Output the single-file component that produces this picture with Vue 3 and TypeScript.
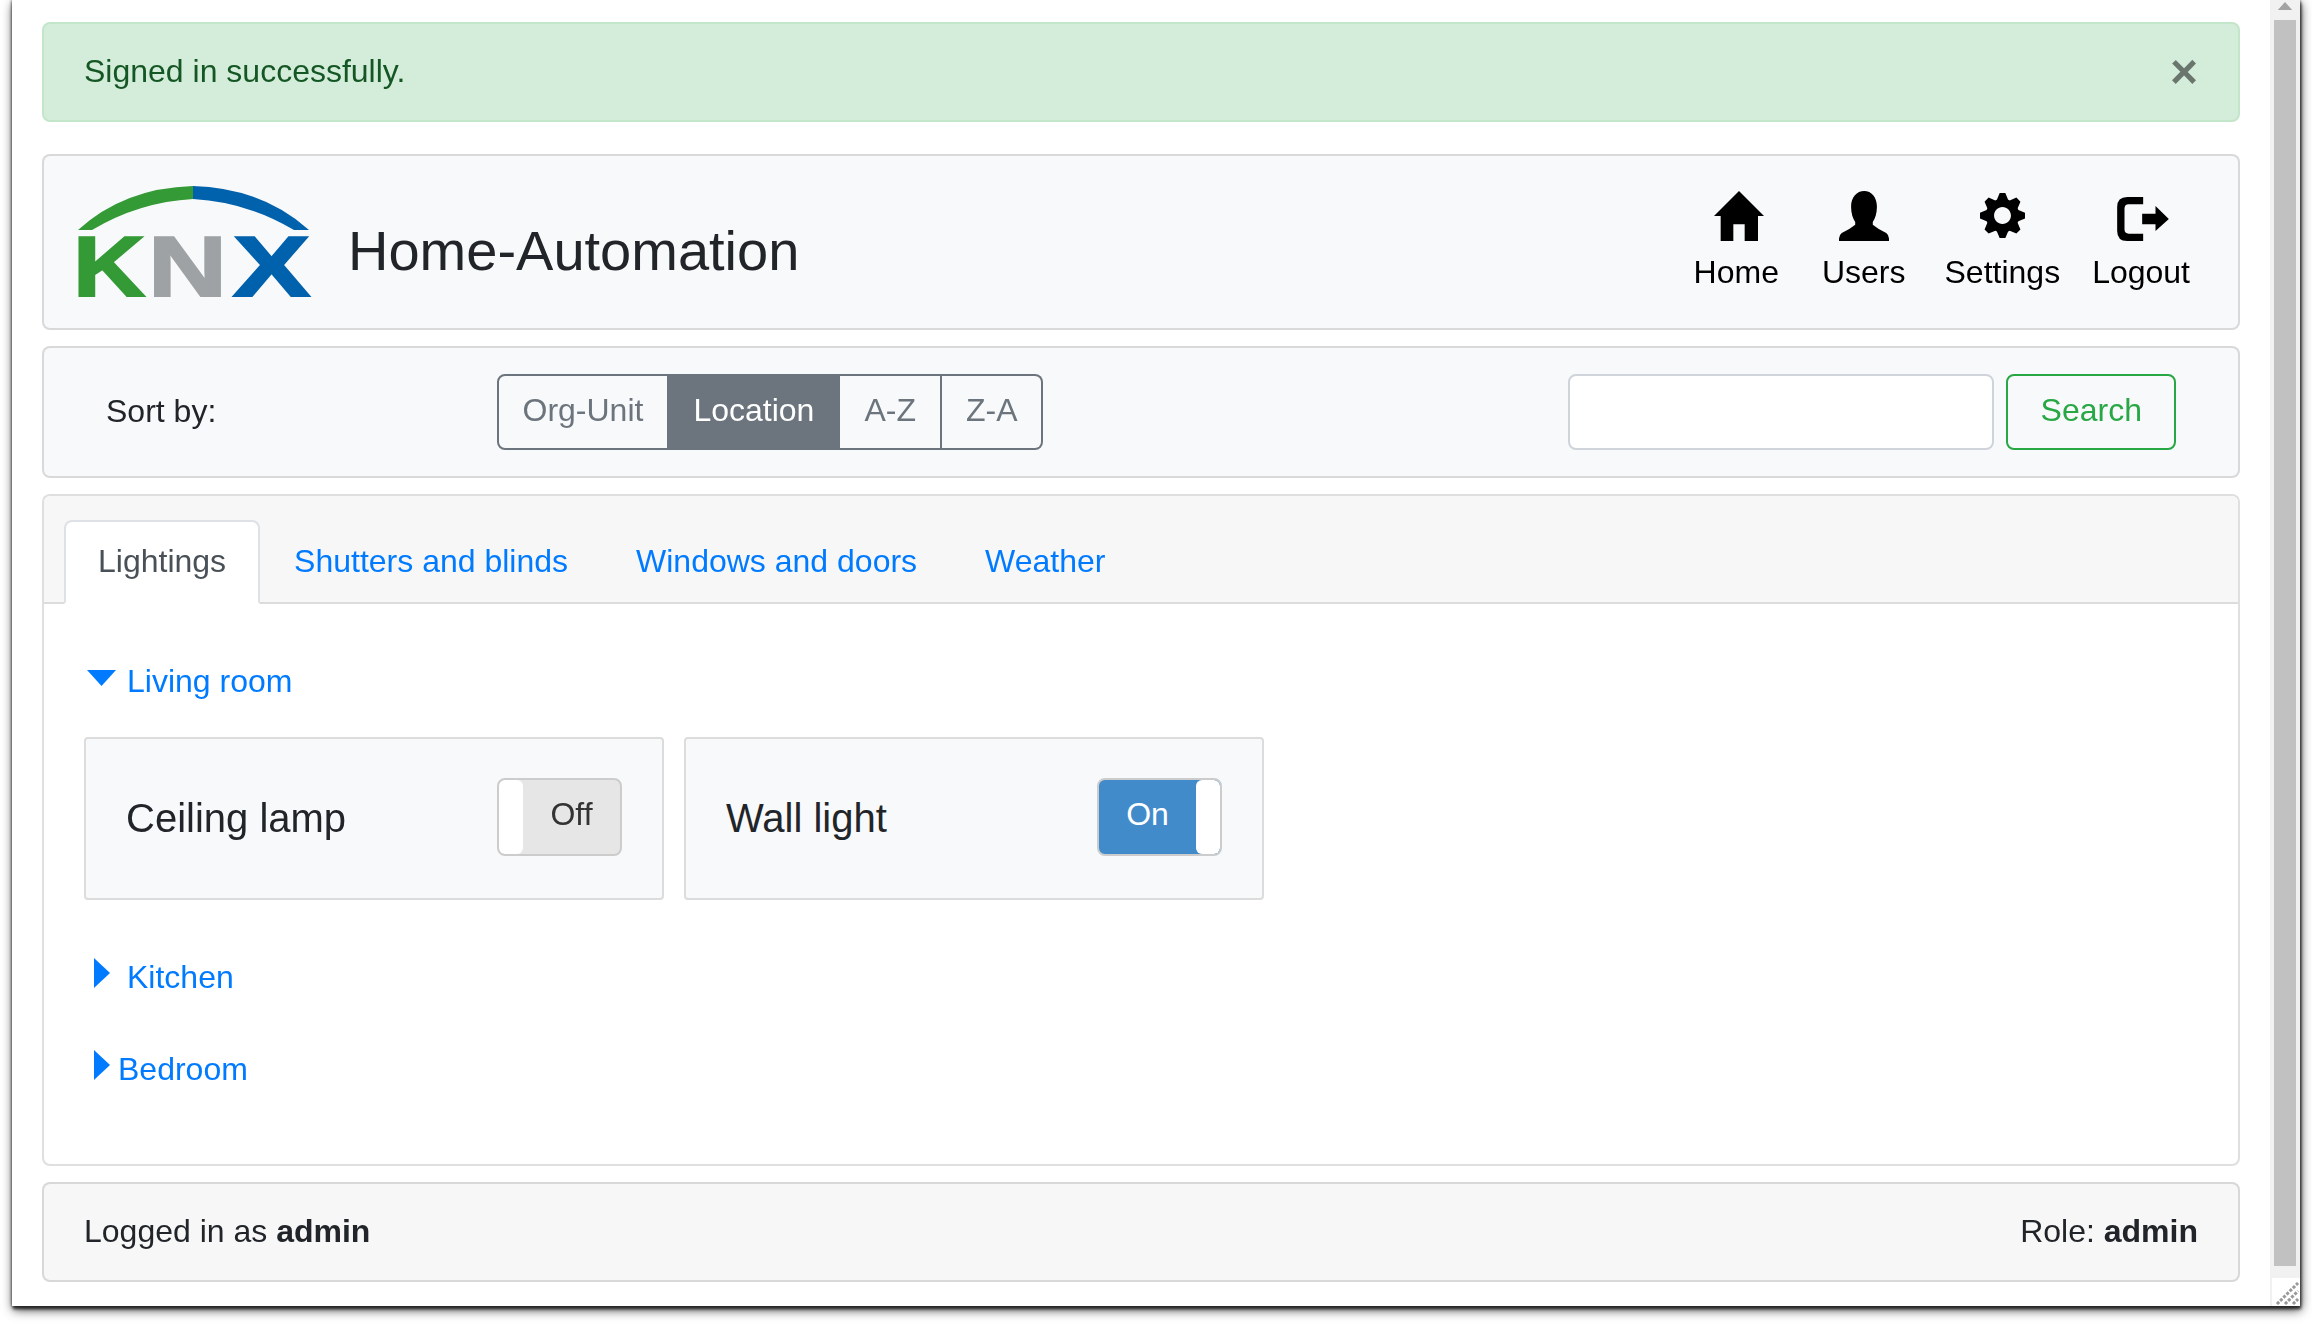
<script setup lang="ts">
interface Room { name: string; open: boolean; tight: boolean }
const tabs: string[] = ['Shutters and blinds', 'Windows and doors', 'Weather']
const sorts = [
  { label: 'Org-Unit', active: false },
  { label: 'Location', active: true },
  { label: 'A-Z', active: false },
  { label: 'Z-A', active: false },
]
const devices = [
  { name: 'Ceiling lamp', on: false },
  { name: 'Wall light', on: true },
]
const closedRooms: Room[] = [
  { name: 'Kitchen', open: false, tight: false },
  { name: 'Bedroom', open: false, tight: true },
]
</script>

<template>
  <div class="window">
    <div class="page">
      <div class="alert">
        <span>Signed in successfully.</span>
        <span class="close">×</span>
      </div>

      <header class="bar brand-bar">
        <div class="brand">
          <svg class="logo" viewBox="70 170 250 150" aria-label="KNX">
            <path fill="#339a35" d="M79 230 Q125 188 194 186 L194 199 Q140 202 93 230 Z" />
            <path fill="#0061ac" d="M194 186 Q263 188 310 230 L295 230 Q248 202 194 199 Z" />
            <text x="74" y="296" class="logo-letter" fill="#339a35" stroke="#339a35" textLength="72" lengthAdjust="spacingAndGlyphs">K</text>
            <text x="149" y="296" class="logo-letter" fill="#9fa2a4" stroke="#9fa2a4" textLength="79" lengthAdjust="spacingAndGlyphs">N</text>
            <text x="234" y="296" class="logo-letter" fill="#0061ac" stroke="#0061ac" textLength="77" lengthAdjust="spacingAndGlyphs">X</text>
          </svg>
          <span class="title">Home-Automation</span>
        </div>
        <nav class="main-nav">
          <a class="nav-item home">
            <svg class="ico" viewBox="0 0 150 150"><path d="M75 0 L150 75 L132 75 L132 150 L92 150 L92 100 L58 100 L58 150 L20 150 L20 75 L0 75Z" /></svg>
            <span>Home</span>
          </a>
          <a class="nav-item users">
            <svg class="ico" viewBox="0 0 145 145"><path d="M73 0 C52 0 35 18 35 45 C35 65 40 80 47 90 L47 98 Q30 112 8 122 Q0 128 0 138 L0 145 L145 145 L145 138 Q145 128 137 122 Q115 112 98 98 L98 90 C105 80 110 65 110 45 C110 18 94 0 73 0Z" /></svg>
            <span>Users</span>
          </a>
          <a class="nav-item settings">
            <svg class="ico gear" viewBox="0 0 8 8"><path d="M3.5 0l-.5 1.19c-.1.03-.19.08-.28.13l-1.19-.5-.72.72.5 1.19c-.05.1-.09.18-.13.28l-1.19.5v1l1.19.5c.04.1.08.18.13.28l-.5 1.19.72.72 1.19-.5c.09.04.18.09.28.13l.5 1.19h1l.5-1.19c.09-.04.19-.08.28-.13l1.19.5.72-.72-.5-1.19c.04-.09.09-.19.13-.28l1.19-.5v-1l-1.19-.5c-.03-.09-.08-.19-.13-.28l.5-1.19-.72-.72-1.19.5c-.09-.04-.19-.09-.28-.13l-.5-1.19h-1zm.5 2.5c.83 0 1.5.67 1.5 1.5s-.67 1.5-1.5 1.5-1.5-.67-1.5-1.5.67-1.5 1.5-1.5z" /></svg>
            <span>Settings</span>
          </a>
          <a class="nav-item logout">
            <svg class="ico exit" viewBox="0 0 155 132"><path d="M78 0 L30 0 Q0 0 0 30 L0 102 Q0 132 30 132 L78 132 L78 110 L35 110 Q22 110 22 97 L22 35 Q22 22 35 22 L78 22Z M75 50 L115 50 L115 27 L155 66 L115 102 L115 82 L75 82Z" /></svg>
            <span>Logout</span>
          </a>
        </nav>
      </header>

      <section class="bar sort-bar">
        <span class="sort-label">Sort by:</span>
        <div class="btn-group">
          <button v-for="s in sorts" :key="s.label" class="sort-btn" :class="{ active: s.active }">{{ s.label }}</button>
        </div>
        <form class="search" @submit.prevent>
          <input class="search-input" type="text" />
          <button class="search-btn">Search</button>
        </form>
      </section>

      <section class="card">
        <div class="card-head">
          <a class="tab active">Lightings</a>
          <a v-for="t in tabs" :key="t" class="tab">{{ t }}</a>
        </div>
        <div class="card-body">
          <a class="room open">
            <svg class="arrow-down" viewBox="0 0 29 16"><path d="M0 0H29L14.5 16Z" /></svg>
            <span>Living room</span>
          </a>
          <div class="devices">
            <div v-for="d in devices" :key="d.name" class="device">
              <span class="device-name">{{ d.name }}</span>
              <div class="toggle" :class="d.on ? 'is-on' : 'is-off'">
                <span class="toggle-label">{{ d.on ? 'On' : 'Off' }}</span>
                <span class="toggle-thumb"></span>
              </div>
            </div>
          </div>
          <a v-for="r in closedRooms" :key="r.name" class="room closed" :class="{ tight: r.tight }">
            <svg class="arrow-right" viewBox="0 0 16 30"><path d="M0 0L16 15L0 30Z" /></svg>
            <span>{{ r.name }}</span>
          </a>
        </div>
      </section>

      <footer class="foot">
        <span>Logged in as <b>admin</b></span>
        <span>Role: <b>admin</b></span>
      </footer>
    </div>

    <aside class="scrollbar">
      <div class="sb-up"></div>
      <div class="sb-thumb"></div>
      <div class="sb-corner">
        <svg class="grip" viewBox="0 0 28 28">
          <path d="M5 26 L26 5 M13 26 L26 13 M21 26 L26 21" />
        </svg>
      </div>
    </aside>
  </div>
</template>

<style>
body { margin: 0; background: #fff; }
#app { min-height: 1324px; overflow: hidden; }
</style>

<style scoped>
.window {
  box-sizing: border-box;
  margin-left: 12px;
  width: 2288px;
  height: 1306px;
  display: flex;
  background: #fff;
  box-shadow: 0 0 3px #333, 1px 3px 3px rgba(0, 0, 0, .75), 1px 4px 10px rgba(0, 0, 0, .7);
  font-family: "Liberation Sans", Arial, sans-serif;
  font-size: 32px;
  line-height: 48px;
  color: #212529;
  filter: blur(.6px);
}
.page {
  box-sizing: border-box;
  width: 2258px;
  flex: none;
  padding: 22px 30px 0 30px;
}
.alert {
  box-sizing: border-box;
  height: 100px;
  padding: 23px 40px 25px;
  display: flex;
  justify-content: space-between;
  background: #d4edda;
  border: 2px solid #c3e6cb;
  border-radius: 8px;
  color: #155724;
  margin-bottom: 32px;
}
.close {
  font-size: 48px;
  font-weight: 700;
  line-height: 48px;
  color: #000;
  opacity: .5;
  margin-top: 1px;
}
.bar {
  box-sizing: border-box;
  display: flex;
  align-items: center;
  background: #f8f9fa;
  border: 2px solid rgba(0, 0, 0, .125);
  border-radius: 8px;
  margin-bottom: 16px;
}
.brand-bar {
  height: 176px;
  padding: 0 48px 0 25px;
  justify-content: space-between;
}
.brand { display: flex; align-items: center; }
.logo { width: 250px; height: 150px; margin-top: 6px; display: block; }
.logo-letter {
  font-family: "Liberation Sans", Arial, sans-serif;
  font-weight: 700;
  font-size: 85px;
  stroke-width: 2px;
}
.title {
  font-size: 56px;
  line-height: 64px;
  margin-left: 29px;
  margin-top: 18px;
}
.main-nav { display: flex; align-items: flex-start; margin-top: 3px; }
.nav-item {
  display: flex;
  flex-direction: column;
  align-items: center;
  color: #000;
}
.ico { width: 50px; height: 50px; display: block; margin-bottom: 7px; fill: #000; }
.home .ico { margin-left: 5px; }
.gear { width: 45px; height: 45px; margin: 2px 0 10px 1px; }
.exit { width: 52px; height: 44px; margin: 6px 0 7px 3px; }
.home { margin-right: 43px; }
.users { margin-right: 39px; }
.settings { margin-right: 32px; }
.sort-bar {
  height: 132px;
  padding: 0 62px;
}
.sort-label { width: 390.5px; flex: none; margin-top: -2px; }
.btn-group { display: flex; }
.sort-btn {
  font: inherit;
  height: 76px;
  padding: 10px 24px 14px;
  background: transparent;
  color: #6c757d;
  border: 2px solid #6c757d;
  border-left-width: 0;
  cursor: pointer;
}
.sort-btn:first-child { border-left-width: 2px; border-radius: 8px 0 0 8px; }
.sort-btn:last-child { border-radius: 0 8px 8px 0; }
.sort-btn.active { background: #6c757d; color: #fff; }
.search { margin-left: auto; display: flex; gap: 12px; }
.search-input {
  box-sizing: border-box;
  width: 426px;
  height: 76px;
  background: #fff;
  border: 2px solid #ced4da;
  border-radius: 8px;
  font: inherit;
  padding: 12px 24px;
  outline: none;
}
.search-btn {
  font: inherit;
  height: 76px;
  padding: 10px 32px 14px 33px;
  background: transparent;
  color: #28a745;
  border: 2px solid #28a745;
  border-radius: 8px;
}
.card {
  box-sizing: border-box;
  height: 672px;
  border: 2px solid rgba(0, 0, 0, .125);
  border-radius: 8px;
  margin-bottom: 16px;
  background: #fff;
}
.card-head {
  display: flex;
  padding: 24px 20px 0;
  height: 108px;
  box-sizing: border-box;
  background: #f7f7f7;
  border-bottom: 2px solid #dcdcdc;
  border-radius: 6px 6px 0 0;
}
.tab {
  box-sizing: border-box;
  height: 84px;
  padding: 15px 32px 17px;
  color: #007bff;
  border: 2px solid transparent;
  border-radius: 8px 8px 0 0;
}
.tab.active {
  background: #fff;
  color: #495057;
  border-color: #dee2e6 #dee2e6 #fff;
}
.card-body { padding: 52px 40px 0; }
.room {
  display: flex;
  align-items: flex-start;
  height: 48px;
  color: #007bff;
}
.arrow-down { width: 29px; height: 16px; margin: 14px 0 0 3px; fill: #007bff; flex: none; }
.arrow-right { width: 16px; height: 30px; margin: 5px 0 0 10px; fill: #007bff; flex: none; }
.open span { margin: 1px 0 0 11px; }
.closed { margin-bottom: 44px; }
.closed span { margin-left: 17px; }
.closed.tight span { margin-left: 8px; }
.devices { display: flex; gap: 20px; margin: 33px 0 53px; }
.device {
  box-sizing: border-box;
  width: 580px;
  height: 163px;
  padding: 0 40px;
  display: flex;
  align-items: center;
  justify-content: space-between;
  background: #f8f9fa;
  border: 2px solid #dcdcdc;
  border-radius: 4px;
}
.device-name { font-size: 40px; line-height: 48px; margin-top: -2px; }
.toggle {
  box-sizing: border-box;
  width: 125px;
  height: 78px;
  display: flex;
  border: 2px solid #ccc;
  border-radius: 8px;
  overflow: hidden;
  margin-top: -3px;
}
.toggle-label {
  flex: 1;
  text-align: center;
  line-height: 68px;
  height: 74px;
}
.toggle-thumb { width: 24px; flex: none; background: #fff; border-radius: 6px; }
.is-off { background: #e6e6e6; flex-direction: row-reverse; }
.is-off .toggle-label { color: #333; }
.is-on { background: #428bca; }
.is-on .toggle-label { color: #fff; }
.foot {
  box-sizing: border-box;
  height: 100px;
  padding: 23px 40px 25px;
  display: flex;
  justify-content: space-between;
  background: #f7f7f7;
  border: 2px solid rgba(0, 0, 0, .125);
  border-radius: 8px;
}
.scrollbar {
  width: 30px;
  flex: none;
  display: flex;
  flex-direction: column;
  background: #f1f1f1;
}
.sb-up {
  height: 20px;
  flex: none;
  background: #a3a3a3;
  clip-path: polygon(50% 10%, 74% 50%, 26% 50%);
}
.sb-thumb {
  width: 22px;
  height: 1246px;
  margin: 0 auto 12px;
  background: #c1c1c1;
  flex: none;
}
.sb-corner {
  flex: 1;
  margin-left: 2px;
  background: #fff;
  min-height: 0;
}
.grip { width: 28px; height: 28px; display: block; fill: none; stroke: #999; stroke-width: 3px; stroke-dasharray: 3 1.5; }
</style>
